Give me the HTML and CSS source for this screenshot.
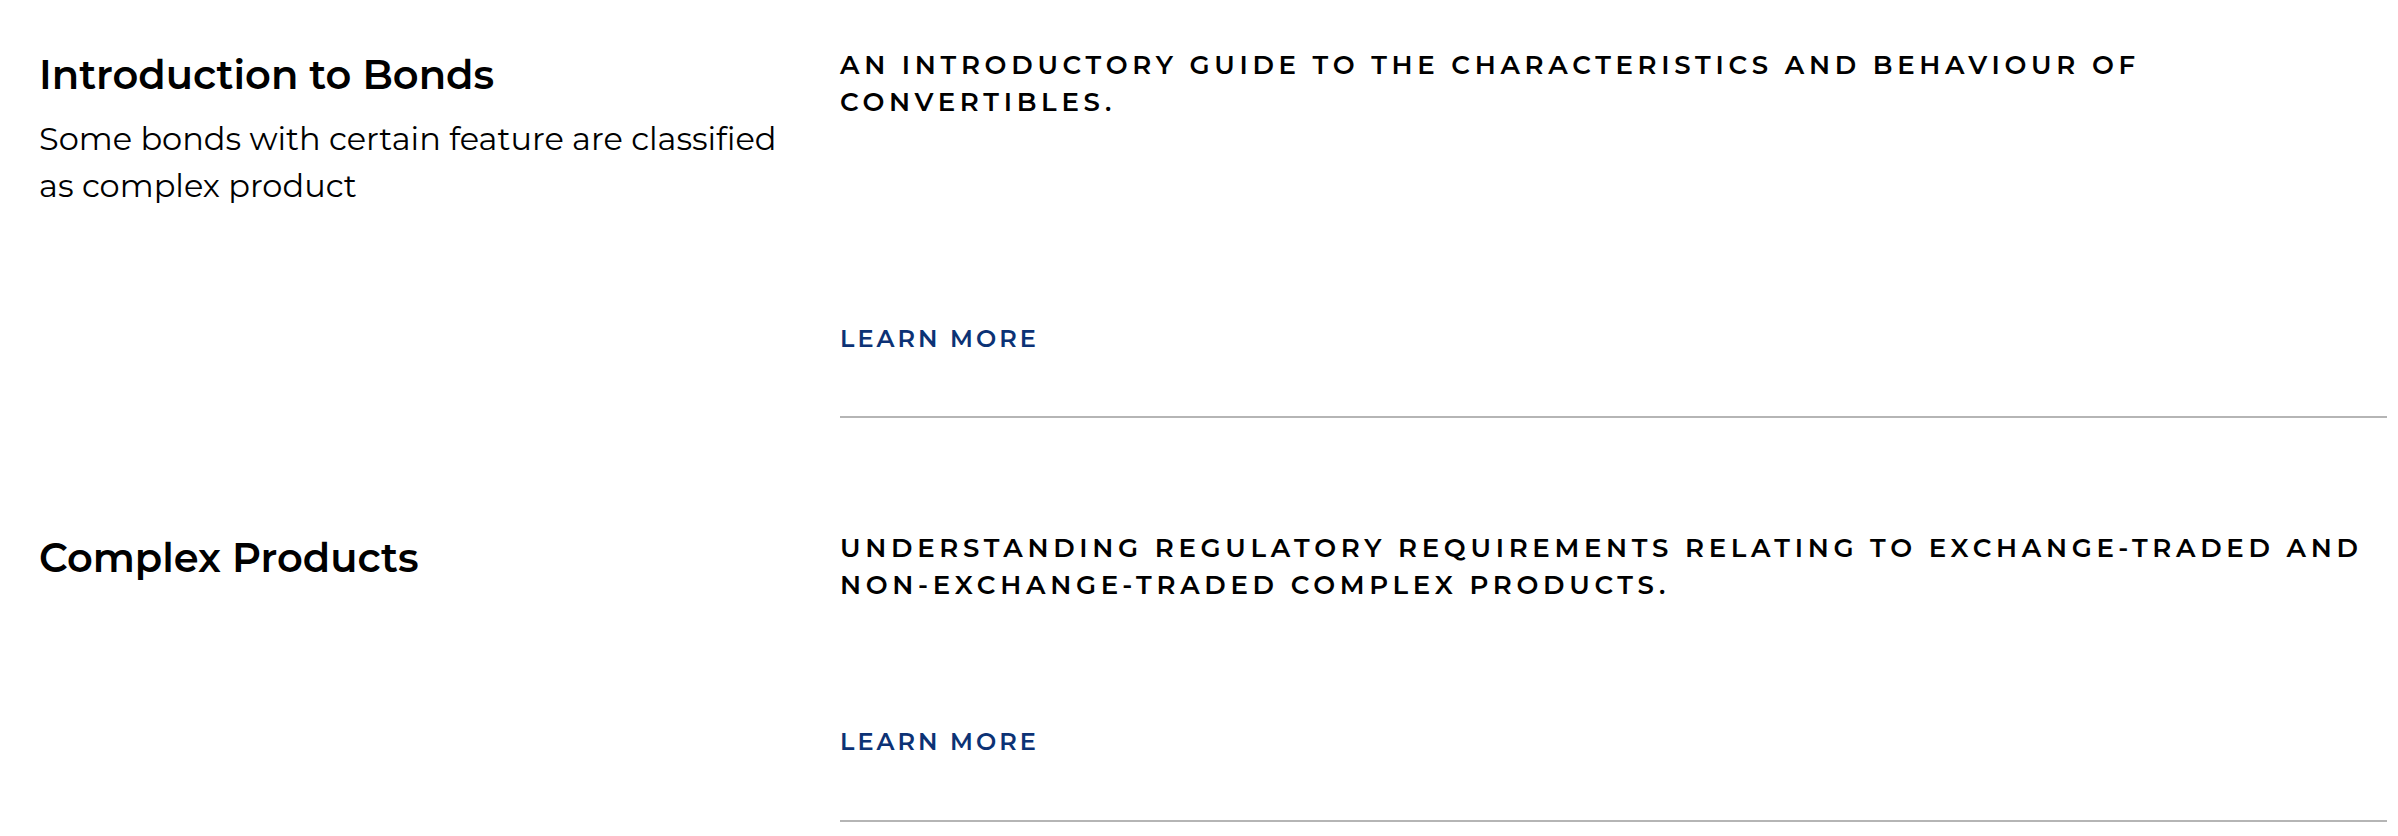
FILE: index.html
```html
<!DOCTYPE html>
<html lang="en">
<head>
    <meta charset="UTF-8">
    <meta name="viewport" content="width=device-width, initial-scale=1.0">
    <title>Product Guides</title>
    <link rel="stylesheet" href="styles.css">
</head>
<body>
    <main class="topics">
        <section class="topic topic-first">
            <div class="topic-intro">
                <h2 class="topic-title">Introduction to Bonds</h2>
                <p class="topic-text">Some bonds with certain feature are classified as complex product</p>
            </div>
            <div class="topic-body">
                <h3 class="topic-summary">An introductory guide to the characteristics and behaviour of convertibles.</h3>
                <a class="learn-more" href="#">Learn more</a>
            </div>
        </section>

        <section class="topic">
            <div class="topic-intro">
                <h2 class="topic-title">Complex Products</h2>
            </div>
            <div class="topic-body">
                <h3 class="topic-summary">Understanding regulatory requirements relating to exchange-traded and non-exchange-traded complex products.</h3>
                <a class="learn-more" href="#">Learn more</a>
            </div>
        </section>
    </main>
</body>
</html>
```

FILE: styles.css
```css
body {
    margin: 0;
    padding: 0;
    background-color: #fff;
    color: #000;
    font-family: "Montserrat", Inter, "Noto Sans", sans-serif;
}

.topics {
    padding: 0 11px 0 39px;
}

.topic {
    display: grid;
    grid-template-columns: 801px 1fr;
    padding-top: 112px;
}

.topic-first {
    padding-top: 47px;
}

.topic-intro {
    padding-right: 40px;
}

.topic-title {
    margin: 3px 0 0 0;
    font-size: 40px;
    line-height: 49px;
    font-weight: 600;
}

.topic-text {
    margin: 16px 0 0 0;
    font-size: 32px;
    line-height: 47px;
    font-weight: 400;
}

.topic-body {
    display: flex;
    flex-direction: column;
    align-items: flex-start;
    padding-bottom: 63px;
    border-bottom: 2px solid #b5b5b5;
}

.topic-summary {
    margin: 0 0 123px 0;
    font-size: 26px;
    line-height: 37px;
    font-weight: 600;
    letter-spacing: 4.7px;
    text-transform: uppercase;
}

.topic-first .topic-summary {
    margin-bottom: 203px;
}

.topic-first .topic-body {
    padding-bottom: 62px;
}

.learn-more {
    display: block;
    font-size: 24px;
    line-height: 30px;
    font-weight: 600;
    letter-spacing: 3px;
    text-transform: uppercase;
    text-decoration: none;
    color: #0c3275;
}
```
